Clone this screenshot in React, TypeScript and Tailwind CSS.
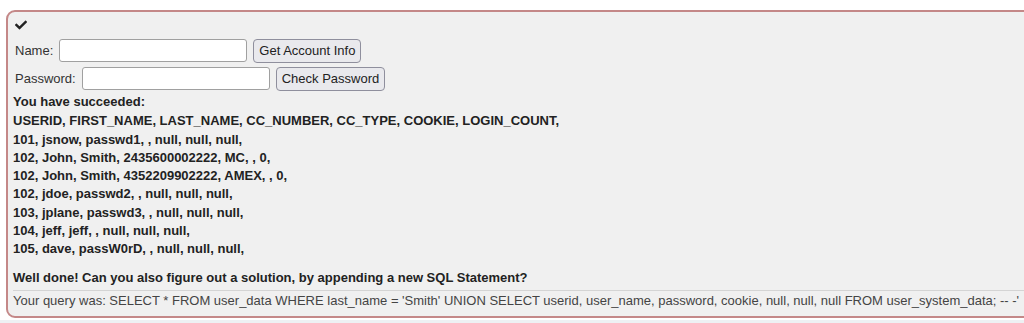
import { FaCheck } from 'react-icons/fa';

const rows = [
  'USERID, FIRST_NAME, LAST_NAME, CC_NUMBER, CC_TYPE, COOKIE, LOGIN_COUNT,',
  '101, jsnow, passwd1, , null, null, null,',
  '102, John, Smith, 2435600002222, MC, , 0,',
  '102, John, Smith, 4352209902222, AMEX, , 0,',
  '102, jdoe, passwd2, , null, null, null,',
  '103, jplane, passwd3, , null, null, null,',
  '104, jeff, jeff, , null, null, null,',
  '105, dave, passW0rD, , null, null, null,',
];

function App() {
  return (
    <div
      className="w-[1024px] h-[323px] overflow-hidden bg-white text-[13px] text-[#333]"
      style={{ fontFamily: '"Liberation Sans", Arial, sans-serif' }}
    >
      <div className="pt-[10px] pl-[6px] h-[320px]">
        <div className="w-[1030px] h-[308px] bg-[#f0f0f0] border-2 border-[#c48888] rounded-[9px] pl-[5px] pt-[5px]">
          <div className="h-[14px] pl-[2px] pt-[2px] text-[#222]">
            <FaCheck size={12} />
          </div>
          {/* lookup form */}
          <div className="flex items-center gap-[6px] pl-[2px] mt-[8px] h-[23px]">
            <span>Name:</span>
            <input className="w-[188px] h-[23px] bg-white border border-[#a0a0a0] rounded-[3px]" />
            <button className="h-[24px] px-[5px] bg-[#e9e9ed] border border-[#8f8f9d] rounded-[4px] text-[13px] text-[#222]">
              Get Account Info
            </button>
          </div>
          <div className="flex items-center gap-[6px] pl-[2px] mt-[5px] h-[23px]">
            <span>Password:</span>
            <input className="w-[188px] h-[23px] bg-white border border-[#a0a0a0] rounded-[3px]" />
            <button className="h-[24px] px-[5px] bg-[#e9e9ed] border border-[#8f8f9d] rounded-[4px] text-[13px] text-[#222]">
              Check Password
            </button>
          </div>
          {/* result */}
          <div className="mt-[3px] font-bold text-[#222] leading-[18.3px]">
            <div className="mb-[1px]">You have succeeded:</div>
            {rows.map((r, i) => (
              <div key={i}>{r}</div>
            ))}
            <div className="mt-[10px] mb-[3px]">Well done! Can you also figure out a solution, by appending a new SQL Statement?</div>
          </div>
          <div className="border-t border-[#d4d4d4] leading-[18px] pt-[1px] text-[#444]">
            Your query was: SELECT * FROM user_data WHERE last_name = 'Smith' UNION SELECT userid, user_name, password, cookie, null, null, null FROM user_system_data; -- -'
          </div>
        </div>
      </div>
      <div className="h-[3px] bg-[#eef0f3]" />
    </div>
  );
}

export default App;
